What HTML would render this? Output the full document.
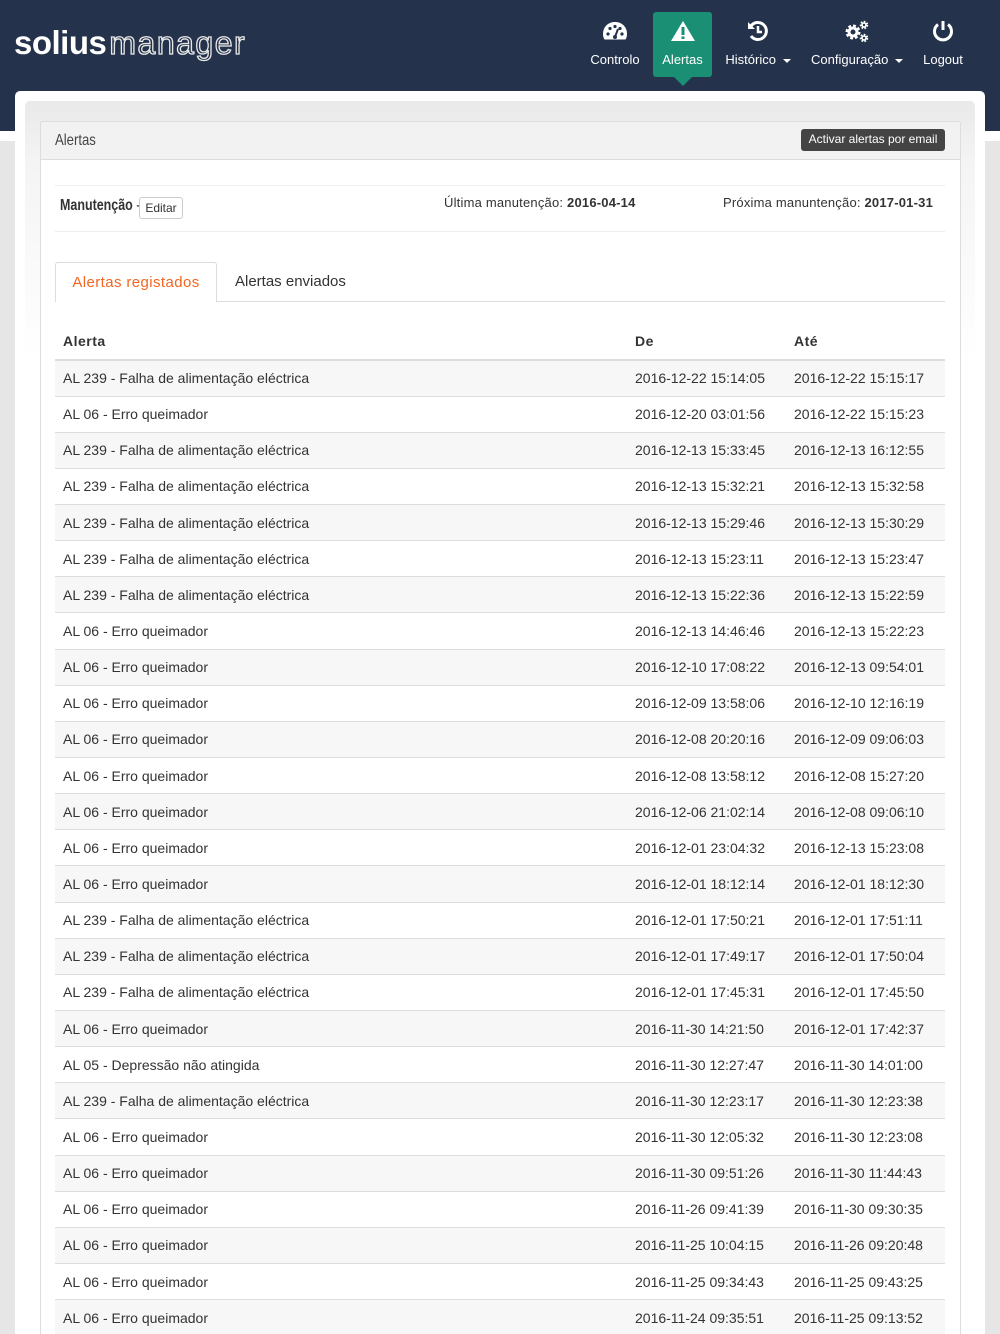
<!DOCTYPE html>
<html style="width:1000px;height:1334px;overflow:hidden"><head><meta charset="utf-8">
<style>
*{box-sizing:border-box;margin:0;padding:0}
body{width:1000px;height:1334px;overflow:hidden;background:#e6e6e6;font-family:"Liberation Sans",sans-serif;color:#333;position:relative}
.nav{position:absolute;left:0;top:0;width:1000px;height:131px;background:#24324b}
.strip{position:absolute;left:0;top:131px;width:1000px;height:10px;background:#fff}
.logo{position:absolute;left:14px;top:24px;font-size:33px;font-weight:bold;color:#fff;letter-spacing:-0.5px;white-space:nowrap}
.logo .m{font-weight:normal;color:#24324b;-webkit-text-stroke:1.3px #e8e8e8;letter-spacing:1.5px;font-size:32px;margin-left:3px}
.ni{position:absolute;top:12px;height:65px;text-align:center;color:#fff;font-size:13px;white-space:nowrap}
.ni svg{display:block;margin:8px auto 10px}
.ni.act{background:#1a8f74;border-radius:3px}
.ni.act:after{content:"";position:absolute;left:50%;margin-left:-9px;bottom:-9px;border:9px solid transparent;border-bottom:0;border-top-color:#1a8f74}
.car{display:inline-block;border-left:4px solid transparent;border-right:4px solid transparent;border-top:4px solid #fff;vertical-align:middle;margin-left:3px}
.card{position:absolute;left:15px;top:91px;width:970px;height:1243px;background:#fff;border-radius:5px 5px 0 0}
.inner{position:absolute;left:25px;top:101px;width:950px;height:1233px;border-radius:5px 5px 0 0;background:linear-gradient(#e9e9e9 0,#f4f4f4 60px,#fff 260px)}
.panel{position:absolute;left:40px;top:121px;width:921px;height:1213px;background:#fff;border:1px solid #ddd;border-bottom:none;border-radius:3px 3px 0 0}
.ph{position:absolute;left:40px;top:121px;width:921px;height:39px;background:#f2f2f2;border:1px solid #ddd;border-radius:3px 3px 0 0}
.ph span{position:absolute;left:14px;top:10px;font-size:16px;color:#444;display:inline-block;transform:scaleX(.82);transform-origin:left}
.btn{position:absolute;left:801px;top:129px;width:144px;height:22px;background:#444;color:#fff;border-radius:3px;font-size:12px;line-height:21px;text-align:center}
.hr{position:absolute;left:55px;width:890px;height:1px;background:#eee}
.mt{position:absolute;left:60px;top:197px;font-size:16px;font-weight:bold;color:#333;display:inline-block;transform:scaleX(.78);transform-origin:left;white-space:nowrap}
.ed{position:absolute;left:139px;top:197px;width:44px;height:22px;border:1px solid #ccc;border-radius:3px;font-size:12px;line-height:20px;text-align:center;color:#333;background:#fff}
.t13{position:absolute;top:195px;font-size:13px;color:#333;letter-spacing:.2px}
.tabs{position:absolute;left:55px;top:301px;width:890px;height:1px;background:#ddd}
.tab1{position:absolute;left:55px;top:262px;width:162px;height:40px;background:#fff;border:1px solid #ddd;border-bottom:none;border-radius:3px 3px 0 0;color:#f26522;font-size:15px;text-align:center;line-height:40px;letter-spacing:.4px}
.tab2{position:absolute;left:235px;top:262px;font-size:15px;line-height:40px;color:#333}
table{position:absolute;left:55px;top:323px;width:890px;border-collapse:collapse;font-size:14px;color:#333}
th{text-align:left;height:37px;border-bottom:2px solid #ddd;padding-left:8px;letter-spacing:.5px;font-weight:bold}
td{height:36.15px;border-top:1px solid #ddd;padding-left:8px}
tr:nth-child(even) td{background:#f7f7f7}
</style></head><body>
<div class="nav"></div><div class="strip"></div>
<div class="logo">solius<span class="m">manager</span></div>

<div class="ni" style="left:585px;width:60px">
<svg width="26" height="22" viewBox="0 0 26 22"><path d="M13 2C6 2 1 7 1 14c0 2 .5 4 1.5 5.5h21C24.5 18 25 16 25 14 25 7 20 2 13 2z" fill="#fff"/><circle cx="6" cy="14" r="1.6" fill="#24324b"/><circle cx="8" cy="8.5" r="1.6" fill="#24324b"/><circle cx="13" cy="6.5" r="1.6" fill="#24324b"/><circle cx="18" cy="8.5" r="1.6" fill="#24324b"/><circle cx="20" cy="14" r="1.6" fill="#24324b"/><path d="M13 17l3-8" stroke="#24324b" stroke-width="2"/><circle cx="13" cy="17" r="2" fill="#24324b"/></svg>Controlo</div>
<div class="ni act" style="left:653px;width:59px">
<svg width="26" height="22" viewBox="0 0 26 22"><path d="M13 1L25 21H1z" fill="#fff"/><rect x="11.5" y="7" width="3" height="8" fill="#1a8f74"/><rect x="11.5" y="16.5" width="3" height="2.5" fill="#1a8f74"/></svg>Alertas</div>
<div class="ni" style="left:722px;width:72px">
<svg width="24" height="22" viewBox="0 0 24 22"><path d="M5 6A8.5 8.5 0 1 1 5 16" stroke="#fff" stroke-width="3" fill="none"/><path d="M2 2v7h7z" fill="#fff"/><path d="M12 6v6h4" stroke="#fff" stroke-width="2.5" fill="none"/></svg>Histórico <span class="car"></span></div>
<div class="ni" style="left:808px;width:98px">
<svg width="28" height="24" viewBox="0 0 28 24" style="margin-top:7px;margin-bottom:9px"><circle cx="10" cy="13" r="5.5" fill="none" stroke="#fff" stroke-width="4" stroke-dasharray="2.5 1.8"/><circle cx="10" cy="13" r="4" fill="none" stroke="#fff" stroke-width="3"/><circle cx="21" cy="6" r="3" fill="none" stroke="#fff" stroke-width="2.5" stroke-dasharray="1.5 1.2"/><circle cx="21" cy="6" r="2" fill="none" stroke="#fff" stroke-width="1.6"/><circle cx="21" cy="19" r="3" fill="none" stroke="#fff" stroke-width="2.5" stroke-dasharray="1.5 1.2"/><circle cx="21" cy="19" r="2" fill="none" stroke="#fff" stroke-width="1.6"/></svg>Configuração <span class="car"></span></div>
<div class="ni" style="left:918px;width:50px">
<svg width="24" height="22" viewBox="0 0 24 22"><path d="M7 4.5A8.5 8.5 0 1 0 17 4.5" stroke="#fff" stroke-width="3" fill="none"/><path d="M12 1v9" stroke="#fff" stroke-width="3"/></svg>Logout</div>

<div class="card"></div><div class="inner"></div><div class="panel"></div>
<div class="ph"><span>Alertas</span></div>
<div class="btn">Activar alertas por email</div>
<div class="hr" style="top:185px"></div>
<div class="hr" style="top:231px"></div>
<div class="mt">Manutenção <span style="font-weight:normal">-</span></div>
<div class="ed">Editar</div>
<div class="t13" style="left:444px">Última manutenção: <b>2016-04-14</b></div>
<div class="t13" style="left:723px">Próxima manuntenção: <b>2017-01-31</b></div>
<div class="tabs"></div>
<div class="tab1">Alertas registados</div>
<div class="tab2">Alertas enviados</div>

<table>
<tr><th style="width:572px">Alerta</th><th style="width:159px">De</th><th>Até</th></tr>
<tr><td>AL 239 - Falha de alimentação eléctrica</td><td>2016-12-22 15:14:05</td><td>2016-12-22 15:15:17</td></tr>
<tr><td>AL 06 - Erro queimador</td><td>2016-12-20 03:01:56</td><td>2016-12-22 15:15:23</td></tr>
<tr><td>AL 239 - Falha de alimentação eléctrica</td><td>2016-12-13 15:33:45</td><td>2016-12-13 16:12:55</td></tr>
<tr><td>AL 239 - Falha de alimentação eléctrica</td><td>2016-12-13 15:32:21</td><td>2016-12-13 15:32:58</td></tr>
<tr><td>AL 239 - Falha de alimentação eléctrica</td><td>2016-12-13 15:29:46</td><td>2016-12-13 15:30:29</td></tr>
<tr><td>AL 239 - Falha de alimentação eléctrica</td><td>2016-12-13 15:23:11</td><td>2016-12-13 15:23:47</td></tr>
<tr><td>AL 239 - Falha de alimentação eléctrica</td><td>2016-12-13 15:22:36</td><td>2016-12-13 15:22:59</td></tr>
<tr><td>AL 06 - Erro queimador</td><td>2016-12-13 14:46:46</td><td>2016-12-13 15:22:23</td></tr>
<tr><td>AL 06 - Erro queimador</td><td>2016-12-10 17:08:22</td><td>2016-12-13 09:54:01</td></tr>
<tr><td>AL 06 - Erro queimador</td><td>2016-12-09 13:58:06</td><td>2016-12-10 12:16:19</td></tr>
<tr><td>AL 06 - Erro queimador</td><td>2016-12-08 20:20:16</td><td>2016-12-09 09:06:03</td></tr>
<tr><td>AL 06 - Erro queimador</td><td>2016-12-08 13:58:12</td><td>2016-12-08 15:27:20</td></tr>
<tr><td>AL 06 - Erro queimador</td><td>2016-12-06 21:02:14</td><td>2016-12-08 09:06:10</td></tr>
<tr><td>AL 06 - Erro queimador</td><td>2016-12-01 23:04:32</td><td>2016-12-13 15:23:08</td></tr>
<tr><td>AL 06 - Erro queimador</td><td>2016-12-01 18:12:14</td><td>2016-12-01 18:12:30</td></tr>
<tr><td>AL 239 - Falha de alimentação eléctrica</td><td>2016-12-01 17:50:21</td><td>2016-12-01 17:51:11</td></tr>
<tr><td>AL 239 - Falha de alimentação eléctrica</td><td>2016-12-01 17:49:17</td><td>2016-12-01 17:50:04</td></tr>
<tr><td>AL 239 - Falha de alimentação eléctrica</td><td>2016-12-01 17:45:31</td><td>2016-12-01 17:45:50</td></tr>
<tr><td>AL 06 - Erro queimador</td><td>2016-11-30 14:21:50</td><td>2016-12-01 17:42:37</td></tr>
<tr><td>AL 05 - Depressão não atingida</td><td>2016-11-30 12:27:47</td><td>2016-11-30 14:01:00</td></tr>
<tr><td>AL 239 - Falha de alimentação eléctrica</td><td>2016-11-30 12:23:17</td><td>2016-11-30 12:23:38</td></tr>
<tr><td>AL 06 - Erro queimador</td><td>2016-11-30 12:05:32</td><td>2016-11-30 12:23:08</td></tr>
<tr><td>AL 06 - Erro queimador</td><td>2016-11-30 09:51:26</td><td>2016-11-30 11:44:43</td></tr>
<tr><td>AL 06 - Erro queimador</td><td>2016-11-26 09:41:39</td><td>2016-11-30 09:30:35</td></tr>
<tr><td>AL 06 - Erro queimador</td><td>2016-11-25 10:04:15</td><td>2016-11-26 09:20:48</td></tr>
<tr><td>AL 06 - Erro queimador</td><td>2016-11-25 09:34:43</td><td>2016-11-25 09:43:25</td></tr>
<tr><td>AL 06 - Erro queimador</td><td>2016-11-24 09:35:51</td><td>2016-11-25 09:13:52</td></tr>
</table>
</body></html>
